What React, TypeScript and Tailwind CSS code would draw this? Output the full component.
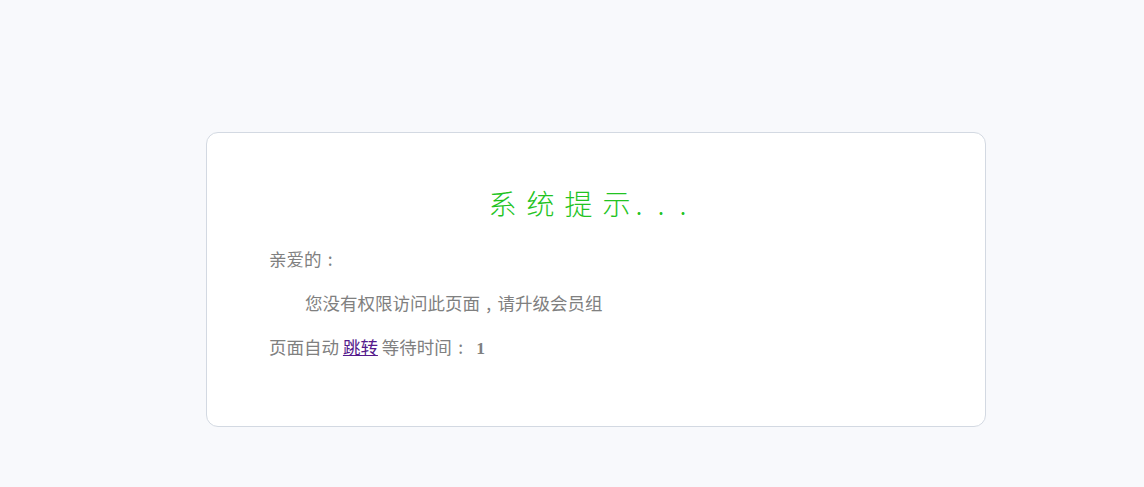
function P({ c }: { c: string }) {
  return <span className="inline-block w-[1em] text-center">{c}</span>;
}

export default function App() {
  return (
    <div className="min-h-[487px] w-full bg-[#f8f9fc] pt-[132px] pl-[206px]" style={{ fontFamily: '"Noto Sans CJK SC", "Noto Sans", sans-serif' }}>
      <div className="w-[780px] h-[295px] rounded-[12px] border border-[#d3d9e2] bg-white pt-[50px] pl-[62px] pr-[62px]">
        <h1 className="text-center text-[28px] leading-[40px] tracking-[10px] text-[#22c322] font-light pr-[2px]">
          系统提示<span className="tracking-[15px] ml-[-5px]">...</span>
        </h1>
        <div className="mt-[14px] text-[17.5px] leading-[44px] text-[#808080]">
          <p>亲爱的<P c=":" /></p>
          <p className="pl-[36px]">您没有权限访问此页面<P c="," />请升级会员组</p>
          <p>
            页面自动 <a href="#" className="text-[#551a8b] underline">跳转</a> 等待时间<P c=":" />{' '}
            <b className="font-bold ml-[3px]" style={{ fontFamily: '"Liberation Serif", serif' }}>1</b>
          </p>
        </div>
      </div>
    </div>
  );
}
